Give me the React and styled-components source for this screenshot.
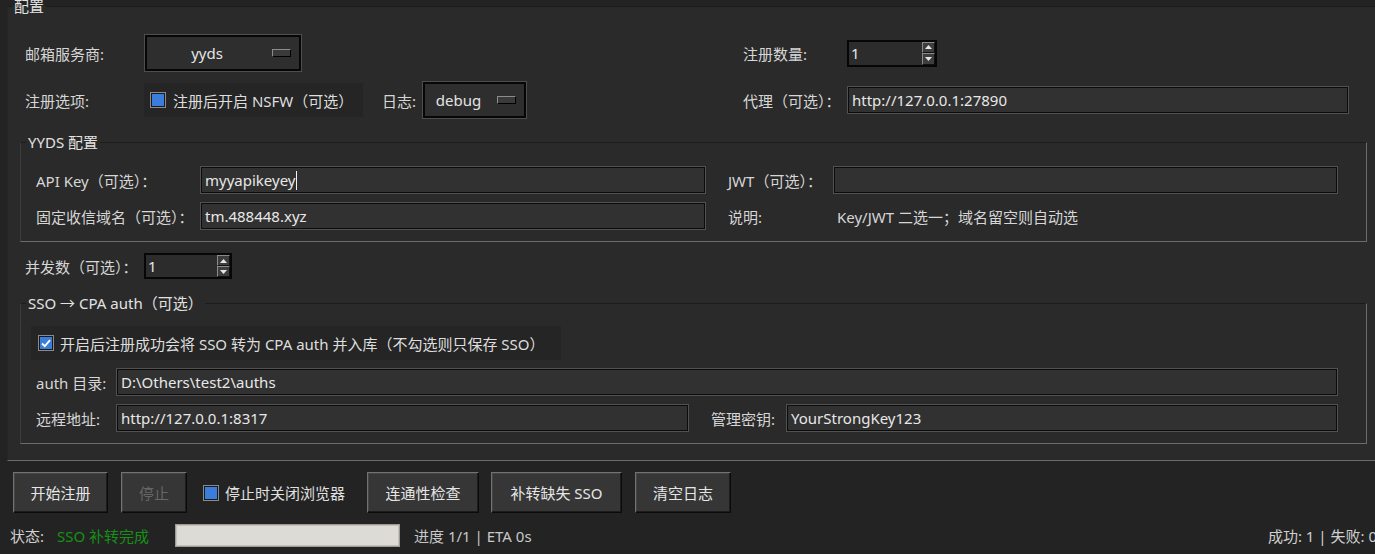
import React from "react"
import styled, { createGlobalStyle } from "styled-components"

const GlobalStyle = createGlobalStyle`
  html, body {
    margin: 0;
    padding: 0;
    background: #232323;
    overflow: hidden;
  }
  body {
    font-family: "Noto Sans", "Noto Sans CJK SC", sans-serif;
    font-size: 15px;
    color: #d6d6d6;
  }
  * {
    box-sizing: border-box;
  }
`

const Window = styled.div`
  display: flex;
  flex-direction: column;
  width: 1392px;
  height: 554px;
  overflow: hidden;
  background: #232323;
`

/* labelled frame, drawn as a grooved fieldset */
const Group = styled.fieldset`
  flex-shrink: 0;
  margin: ${({ $m }) => $m || "0"};
  padding: 0;
  min-width: 0;
  width: ${({ $w }) => ($w ? `${$w}px` : "auto")};
  background: #2a2a2a;
  border: 1px solid;
  border-color: #1c1c1c #6c6c6c #6c6c6c ${({ $left }) => $left || "#3c3c3c"};
`

const Legend = styled.legend`
  margin-left: ${({ $indent }) => $indent ?? 5}px;
  padding: 0 2px;
  line-height: 18px;
  color: #e2e2e2;
  white-space: nowrap;
`

const ConfigBody = styled.div`
  display: flex;
  flex-direction: column;
  padding: 19px 0 16px 0;
`

const TopGrid = styled.div`
  display: grid;
  grid-template-columns: 119px 599px 104px 502px;
  grid-auto-rows: 38px;
  row-gap: 9px;
  align-items: center;
  margin-left: 17px;
`

const Label = styled.span`
  white-space: nowrap;
  color: #d6d6d6;
`

const Inline = styled.div`
  display: flex;
  align-items: center;
`

const LogLabel = styled(Label)`
  width: 40px;
  margin-left: 19px;
`

const OptionMenu = styled.div`
  display: flex;
  align-items: center;
  width: ${({ $w }) => $w}px;
  height: 38px;
  padding: 0 10px 0 3px;
  border: 1px solid #4e4e4e;
  box-shadow: inset 0 0 0 2px #060606;
  background: #2e2e2e;
  color: #e4e4e4;
`

const OptionText = styled.span`
  flex: 1;
  text-align: center;
`

const Indicator = styled.span`
  width: 19px;
  height: 8px;
  margin-left: 6px;
  border: 1px solid;
  border-color: #8c8c8c #000 #000 #8c8c8c;
  background: #3a3a3a;
`

const Field = styled.div`
  display: flex;
  align-items: center;
  width: ${({ $w }) => ($w ? `${$w}px` : "auto")};
  height: 28px;
  padding: 0 4px;
  border: 1px solid #515151;
  box-shadow: inset 0 0 0 1px #0c0c0c;
  background: #313131;
  color: #e8e8e8;
  white-space: nowrap;
  overflow: hidden;
  grid-column: ${({ $span }) => $span || "auto"};
`

const Caret = styled.span`
  width: 1px;
  height: 19px;
  margin-left: 1px;
  background: #f2f2f2;
`

const Spin = styled.div`
  display: flex;
  width: ${({ $w }) => $w}px;
  height: ${({ $h }) => $h || 27}px;
  border: 2px solid #060606;
  background: #2c2c2c;
  color: #e8e8e8;
`

const SpinValue = styled.span`
  flex: 1;
  display: flex;
  align-items: center;
  padding-left: 2px;
`

const SpinArrows = styled.div`
  display: flex;
  flex-direction: column;
  width: 13px;
`

const SpinArrow = styled.div`
  flex: 1;
  display: flex;
  align-items: center;
  justify-content: center;
  border: 1px solid;
  border-color: #8a8a8a #111 #111 #8a8a8a;
  background: #3d3d3d;
`

const CheckFrame = styled.div`
  display: flex;
  align-items: center;
  gap: ${({ $gap }) => $gap || 6}px;
  width: ${({ $w }) => $w}px;
  height: 34px;
  padding-left: ${({ $pl }) => $pl || 6}px;
  background: #252525;
  color: #dedede;
  white-space: nowrap;
`

const CheckBox = styled.span`
  flex-shrink: 0;
  display: flex;
  align-items: center;
  justify-content: center;
  width: 16px;
  height: 16px;
  border: 1px solid #8a8a8a;
  box-shadow: inset 0 0 0 1px #1b1b1b;
  background: #3b7ddd;
`

const PairGrid = styled.div`
  display: grid;
  grid-template-columns: ${({ $cols }) => $cols};
  column-gap: ${({ $gap }) => $gap || 0}px;
  row-gap: 8px;
  grid-auto-rows: 28px;
  align-items: center;
  padding: ${({ $pad }) => $pad || 0};
  margin: ${({ $m }) => $m || 0};
`

const Note = styled.span`
  padding-left: 4px;
  white-space: nowrap;
  color: #d6d6d6;
`

const SsoBody = styled.div`
  padding: 14px 0 11px 10px;
`

const KeyLabel = styled(Label)`
  grid-column: 4;
`

const ConcurrencyRow = styled.div`
  display: grid;
  grid-template-columns: 119px auto;
  align-items: center;
  height: 26px;
  margin: 11px 0 15px 17px;
`

const ButtonBar = styled.div`
  flex-shrink: 0;
  display: flex;
  align-items: center;
  height: 41px;
  margin-top: 11px;
  padding-left: 13px;
`

const Button = styled.button`
  width: ${({ $w }) => $w}px;
  height: 41px;
  margin-left: ${({ $ml }) => $ml ?? 13}px;
  padding: 0;
  font: inherit;
  color: ${({ disabled }) => (disabled ? "#666" : "#e6e6e6")};
  background: #363636;
  border: 1px solid;
  border-color: #727272 #0b0b0b #0b0b0b #727272;
  box-shadow: inset -1px -1px 0 #1c1c1c, inset 1px 1px 0 #454545;
  white-space: nowrap;
`

const PlainCheck = styled.label`
  display: flex;
  align-items: center;
  gap: 6px;
  margin-left: 16px;
  color: #e0e0e0;
  white-space: nowrap;
`

const StatusBar = styled.div`
  flex-shrink: 0;
  display: flex;
  align-items: center;
  height: 23px;
  margin-top: 11px;
  padding: 0 15px 0 10px;
  white-space: nowrap;
`

const StatusLabel = styled.span`
  width: 47px;
  color: #d0d0d0;
`

const StatusValue = styled.span`
  width: 118px;
  color: #169016;
`

const Progress = styled.div`
  width: 225px;
  height: 23px;
  border: 1px solid #9e9b94;
  box-shadow: inset 0 0 0 1px #c4c1ba;
  background: #dddbd6;
`

const ProgressText = styled.span`
  margin-left: 14px;
  color: #c8c8c8;
`

const Stats = styled.span`
  margin-left: auto;
  color: #d0d0d0;
`

const Tri = ({ up }) => (
  <svg width="7" height="4" viewBox="0 0 7 4">
    <path d={up ? "M0 4 L3.5 0 L7 4 Z" : "M0 0 L3.5 4 L7 0 Z"} fill="#e6e6e6" />
  </svg>
)

const Tick = () => (
  <svg width="10" height="9" viewBox="0 0 10 9">
    <path d="M1 4.5 L3.8 7.2 L9 1.2" stroke="#fff" strokeWidth="1.8" fill="none" />
  </svg>
)

const Spinbox = ({ value, w, h }) => (
  <Spin $w={w} $h={h}>
    <SpinValue>{value}</SpinValue>
    <SpinArrows>
      <SpinArrow>
        <Tri up />
      </SpinArrow>
      <SpinArrow>
        <Tri />
      </SpinArrow>
    </SpinArrows>
  </Spin>
)

const Option = ({ value, w }) => (
  <OptionMenu $w={w}>
    <OptionText>{value}</OptionText>
    <Indicator />
  </OptionMenu>
)

export default function App() {
  return (
    <Window>
      <GlobalStyle />
      <Group $m="-3px 0 0 7px" $w={1385} $left="#262626">
        <Legend $indent={4}>配置</Legend>
        <ConfigBody>
          <TopGrid>
            <Label>邮箱服务商:</Label>
            <Option value="yyds" w={158} />
            <Label>注册数量:</Label>
            <Spinbox value="1" w={90} />

            <Label>注册选项:</Label>
            <Inline>
              <CheckFrame $w={219} $gap={7}>
                <CheckBox />
                注册后开启 NSFW（可选）
              </CheckFrame>
              <LogLabel>日志:</LogLabel>
              <Option value="debug" w={105} />
            </Inline>
            <Label>代理（可选）：</Label>
            <Field $w={502}>http://127.0.0.1:27890</Field>
          </TopGrid>

          <Group $m="14px 0 0 12px" $w={1347}>
            <Legend>YYDS 配置</Legend>
            <PairGrid $cols="142px 506px 83px 505px" $gap={22} $pad="15px 0 11px 15px">
              <Label>API Key（可选）：</Label>
              <Field>
                myyapikeyey
                <Caret />
              </Field>
              <Label>JWT（可选）：</Label>
              <Field />

              <Label>固定收信域名（可选）：</Label>
              <Field>tm.488448.xyz</Field>
              <Label>说明:</Label>
              <Note>Key/JWT 二选一；域名留空则自动选</Note>
            </PairGrid>
          </Group>

          <ConcurrencyRow>
            <Label>并发数（可选）：</Label>
            <Spinbox value="1" w={88} h={26} />
          </ConcurrencyRow>

          <Group $m="0 0 0 12px" $w={1347}>
            <Legend>SSO → CPA auth（可选）</Legend>
            <SsoBody>
              <CheckFrame $w={530} $pl={7}>
                <CheckBox>
                  <Tick />
                </CheckBox>
                开启后注册成功会将 SSO 转为 CPA auth 并入库（不勾选则只保存 SSO）
              </CheckFrame>
              <PairGrid $cols="80px 573px 22px 75px 552px" $m="8px 0 0 5px">
                <Label>auth 目录:</Label>
                <Field $span="2 / -1">D:\Others\test2\auths</Field>

                <Label>远程地址:</Label>
                <Field>http://127.0.0.1:8317</Field>
                <KeyLabel>管理密钥:</KeyLabel>
                <Field>YourStrongKey123</Field>
              </PairGrid>
            </SsoBody>
          </Group>
        </ConfigBody>
      </Group>

      <ButtonBar>
        <Button $w={95} $ml={0}>开始注册</Button>
        <Button $w={66} disabled>停止</Button>
        <PlainCheck>
          <CheckBox />
          停止时关闭浏览器
        </PlainCheck>
        <Button $w={112} $ml={22}>连通性检查</Button>
        <Button $w={131} $ml={12}>补转缺失 SSO</Button>
        <Button $w={96}>清空日志</Button>
      </ButtonBar>

      <StatusBar>
        <StatusLabel>状态:</StatusLabel>
        <StatusValue>SSO 补转完成</StatusValue>
        <Progress />
        <ProgressText>进度 1/1 | ETA 0s</ProgressText>
        <Stats>成功: 1 | 失败: 0</Stats>
      </StatusBar>
    </Window>
  )
}
